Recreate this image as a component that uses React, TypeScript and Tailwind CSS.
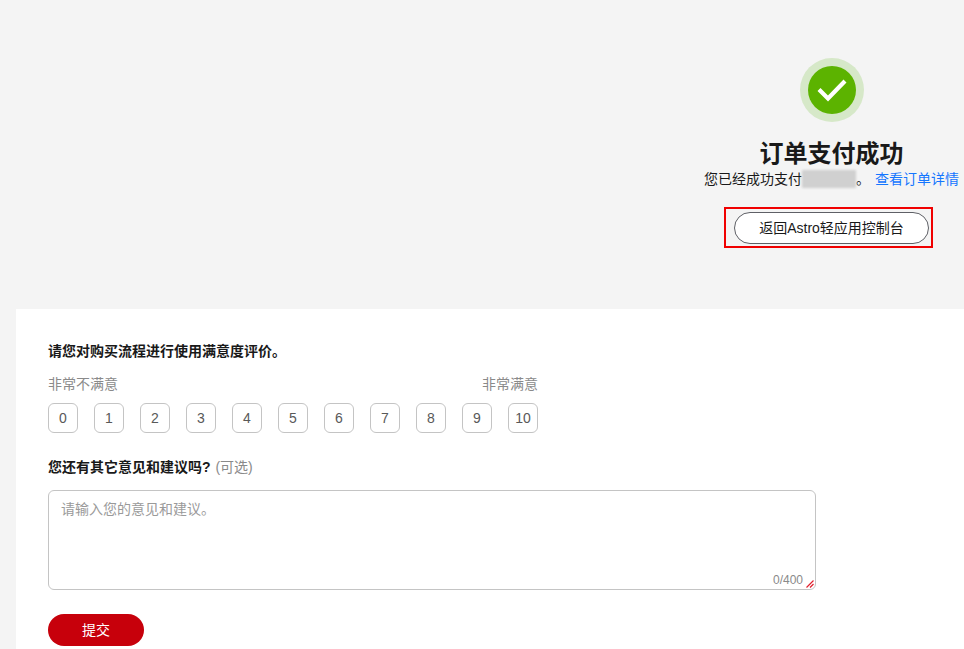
const SCORES = [0, 1, 2, 3, 4, 5, 6, 7, 8, 9, 10]

const fontCls = "font-['Liberation_Sans','Noto_Sans_CJK_SC',sans-serif]"

export default function App() {
  return (
    <div className={`h-[649px] overflow-hidden bg-[#f4f4f4] ${fontCls}`}>
      {/* Result */}
      <div className="h-[309px] flex justify-end pr-[5px] pt-[58px]">
        <div className="w-[255px] flex flex-col items-center">
          <div className="w-16 h-16 rounded-full bg-[#d6e8c8] flex items-center justify-center">
            <div className="w-12 h-12 rounded-full bg-[#5cb300] flex items-center justify-center">
              <svg width="30" height="24" viewBox="0 0 30 24" fill="none">
                <path d="M2 11.5 L11 20.5 L28 3" stroke="#fff" strokeWidth="4.2" />
              </svg>
            </div>
          </div>
          <h1 className="mt-[16px] text-2xl leading-[32px] font-bold text-[#191919]">订单支付成功</h1>
          <div className="flex items-center text-sm leading-[18px] text-[#191919] whitespace-nowrap">
            <span>您已经成功支付</span>
            <span className="w-[54px] h-[18px] bg-[#d0d0d0] blur-[1px]"></span>
            <span>。</span>
            <a className="ml-[5px] text-[#1476ff]">查看订单详情</a>
          </div>
          <div className="mt-[19px] self-start ml-[20px] border-2 border-[#f00000] pl-2 pr-[2px] pt-[3px] pb-[2px]">
            <button className="block w-[195px] h-8 rounded-full border border-[#5e6066] bg-white text-sm text-[#191919]">
              返回Astro轻应用控制台
            </button>
          </div>
        </div>
      </div>

      {/* Survey */}
      <div className="ml-4 h-[340px] bg-white pl-8 pt-[33px]">
        <p className="text-sm leading-[18px] font-bold text-[#191919]">请您对购买流程进行使用满意度评价。</p>
        <div className="mt-[15px] w-[490px] flex justify-between text-sm leading-[18px] text-[#8a8a8a]">
          <span>非常不满意</span>
          <span>非常满意</span>
        </div>
        <div className="mt-[10px] flex gap-4">
          {SCORES.map(n => (
            <button key={n} className="w-[30px] h-[30px] rounded-[6px] border border-[#c4c4c4] bg-white text-sm text-[#595959]">
              {n}
            </button>
          ))}
        </div>
        <p className="mt-[25px] text-sm leading-[18px] text-[#8a8a8a]">
          <span className="font-bold text-[#191919]">您还有其它意见和建议吗?</span> <span className="ml-[1px]">(可选)</span>
        </p>
        <div className="relative mt-[14px] w-[768px] h-[100px] rounded-[6px] border border-[#c4c4c4] pl-3 pt-[9px] text-sm leading-[18px] text-[#9a9a9a]">
          请输入您的意见和建议。
          <span className="absolute right-3 bottom-[1px] text-xs text-[#8a8a8a]">0/400</span>
          <svg className="absolute right-[1px] bottom-[1px]" width="8" height="8" viewBox="0 0 8 8" fill="none">
            <path d="M0.5 7.5 L7.5 0.5 M4 7.5 L7.5 4" stroke="#e0202e" strokeWidth="1.2" />
          </svg>
        </div>
        <button className="mt-6 w-24 h-8 rounded-full bg-[#c7000b] text-sm text-white">提交</button>
      </div>
    </div>
  )
}
